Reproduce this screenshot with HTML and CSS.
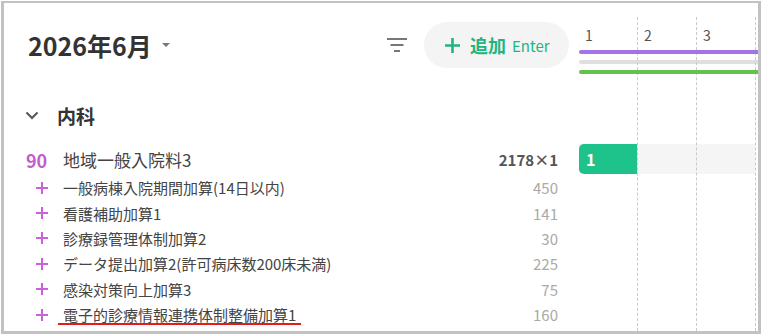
FILE: index.html
```html
<!DOCTYPE html>
<html lang="ja">

<head>
    <meta charset="UTF-8" />
    <title>2026年6月</title>
    <link rel="stylesheet" href="styles.css">
</head>

<body>
    <div class="frame">
        <div class="list">
            <header class="toolbar">
                <button class="month">2026年6月<span class="caret"></span></button>
                <div class="tools">
                    <svg class="filter" width="20" height="14" viewBox="0 0 20 14">
                        <path d="M0 1h20M3.5 7h13M7 13h6" stroke="#777" stroke-width="2" />
                    </svg>
                    <button class="add">
                        <svg width="15" height="15" viewBox="0 0 15 15">
                            <path d="M7.5 0v15M0 7.5h15" stroke="currentColor" stroke-width="2.6" />
                        </svg>
                        <b>追加</b>
                        <span class="key">Enter</span>
                    </button>
                </div>
            </header>

            <div class="dept">
                <svg width="14" height="9" viewBox="0 0 14 9">
                    <path d="M1.5 1.5l5.5 5.5 5.5-5.5" fill="none" stroke="#555" stroke-width="2" />
                </svg>
                内科
            </div>

            <div class="item main">
                <span class="qty">90</span>
                <span class="name">地域一般入院料3</span>
                <span class="pts">2178×1</span>
            </div>
            <div class="item">
                <span class="plus"><svg width="12" height="12" viewBox="0 0 12 12"><path d="M6 0v12M0 6h12" /></svg></span>
                <span class="name">一般病棟入院期間加算(14日以内)</span>
                <span class="pts">450</span>
            </div>
            <div class="item">
                <span class="plus"><svg width="12" height="12" viewBox="0 0 12 12"><path d="M6 0v12M0 6h12" /></svg></span>
                <span class="name">看護補助加算1</span>
                <span class="pts">141</span>
            </div>
            <div class="item">
                <span class="plus"><svg width="12" height="12" viewBox="0 0 12 12"><path d="M6 0v12M0 6h12" /></svg></span>
                <span class="name">診療録管理体制加算2</span>
                <span class="pts">30</span>
            </div>
            <div class="item">
                <span class="plus"><svg width="12" height="12" viewBox="0 0 12 12"><path d="M6 0v12M0 6h12" /></svg></span>
                <span class="name">データ提出加算2(許可病床数200床未満)</span>
                <span class="pts">225</span>
            </div>
            <div class="item">
                <span class="plus"><svg width="12" height="12" viewBox="0 0 12 12"><path d="M6 0v12M0 6h12" /></svg></span>
                <span class="name">感染対策向上加算3</span>
                <span class="pts">75</span>
            </div>
            <div class="item">
                <span class="plus"><svg width="12" height="12" viewBox="0 0 12 12"><path d="M6 0v12M0 6h12" /></svg></span>
                <span class="name"><span class="marked">電子的診療情報連携体制整備加算1</span></span>
                <span class="pts">160</span>
            </div>
        </div>

        <div class="timeline">
            <div class="days">
                <span>1</span>
                <span>2</span>
                <span>3</span>
            </div>
            <div class="bars">
                <div class="bar purple"></div>
                <div class="bar gray"></div>
                <div class="bar green"></div>
            </div>
            <div class="gantt-row">
                <div class="block">1</div>
            </div>

            <!-- 日付の区切り線 -->
            <div class="grid">
                <div class="col"></div>
                <div class="col"></div>
                <div class="col"></div>
            </div>
        </div>
    </div>
</body>

</html>
```

FILE: styles.css
```css
body {
    margin: 0;
    font-family: "Noto Sans CJK JP", sans-serif;
    color: #333;
    background: #ffffff;
}

.frame {
    margin: 1px 0 0 1px;
    width: 760px;
    height: 333px;
    box-sizing: border-box;
    border: 3px solid #c2c2c2;
    border-top-width: 2px;
    display: flex;
    overflow: hidden;
    background: #fff;
}

.list {
    width: 575px;
    flex-shrink: 0;
}

.toolbar {
    height: 84px;
    display: flex;
    align-items: center;
    justify-content: space-between;
    padding: 0 10px 0 24px;
}

button {
    font-family: inherit;
    border: none;
    background: none;
    padding: 0;
    cursor: pointer;
}

.month {
    display: flex;
    align-items: center;
    font-size: 25px;
    font-weight: 700;
    color: #333;
}

.caret {
    margin-left: 10px;
    border-left: 4px solid transparent;
    border-right: 4px solid transparent;
    border-top: 4px solid #777;
}

.tools {
    display: flex;
    align-items: center;
    gap: 17px;
}

.add {
    width: 145px;
    height: 46px;
    border-radius: 23px;
    background: #f4f4f4;
    color: #22b47f;
    display: flex;
    align-items: center;
    padding-left: 21px;
}

.add b {
    font-size: 18px;
    margin-left: 10px;
}

.add .key {
    font-size: 15px;
    margin-left: 6px;
}

.dept {
    height: 57px;
    display: flex;
    align-items: center;
    gap: 18px;
    padding-left: 21px;
    font-size: 19px;
    font-weight: 700;
    color: #333;
}

.item {
    height: 25.4px;
    display: flex;
    align-items: center;
    padding: 0 21px 0 0;
    font-size: 15px;
    color: #444;
}

.item.main {
    height: 31px;
    font-size: 17px;
}

.qty {
    width: 59px;
    padding-left: 22px;
    box-sizing: border-box;
    font-size: 18px;
    font-weight: 700;
    color: #c35ccf;
}

.plus {
    width: 59px;
    padding-left: 32px;
    box-sizing: border-box;
    display: flex;
    align-items: center;
}

.plus path {
    stroke: #cc5fdc;
    stroke-width: 2;
}

.name {
    flex: 1;
}

.marked {
    display: inline-block;
    line-height: 17px;
    padding: 0 5px;
    margin-left: -5px;
    border-bottom: 2px solid #e41b1b;
}

.pts {
    font-size: 15px;
    color: #a9a9a9;
}

.main .pts {
    font-weight: 700;
    color: #555;
}

.timeline {
    flex: 1;
    position: relative;
}

.days {
    display: flex;
    margin-top: 22px;
    height: 20px;
    font-size: 14px;
    color: #555;
    line-height: 20px;
}

.days span {
    width: 59px;
    padding-left: 6px;
    box-sizing: border-box;
}

.bars {
    margin-top: 5px;
    display: flex;
    flex-direction: column;
    gap: 6px;
}

.bar {
    height: 4px;
    border-radius: 2px 0 0 2px;
}

.bar.purple {
    background: #a474e6;
    position: relative;
    z-index: 2;
}

.bar.gray {
    background: #dfdfdf;
}

.bar.green {
    background: #62c24c;
    position: relative;
    z-index: 2;
}

.gantt-row {
    margin-top: 70px;
    height: 30px;
    width: 176px;
    background: #f5f5f5;
}

.block {
    width: 58px;
    height: 30px;
    border-radius: 5px 0 0 5px;
    background: #1ec38c;
    color: #fff;
    font-size: 16px;
    font-weight: 700;
    line-height: 30px;
    padding-left: 7px;
    box-sizing: border-box;
    position: relative;
    z-index: 2;
}

.grid {
    position: absolute;
    top: 14px;
    bottom: 0;
    left: 0;
    display: flex;
    z-index: 1;
}

.col {
    width: 58px;
    border-right: 1px dashed #c9c9c9;
}
```
